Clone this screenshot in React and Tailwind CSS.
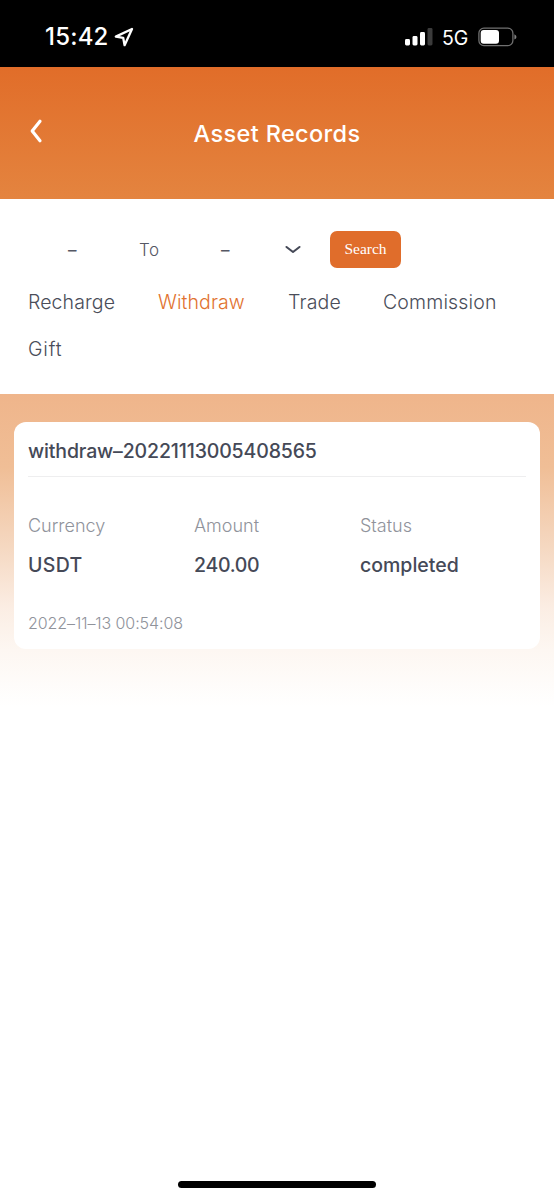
const tabs = [
  { name: "Recharge", style: "w-[88px] tracking-[0.1px] text-[#4a4d59]" },
  { name: "Withdraw", style: "w-[88px] tracking-[0.1px] text-[#e1722f]" },
  { name: "Trade", style: "w-[53px] tracking-[0.2px] text-[#4a4d59]" },
  { name: "Commission", style: "w-[114px] tracking-[0.15px] text-[#4a4d59]" },
  { name: "Gift", style: "w-[35px] tracking-[0.8px] text-[#4a4d59]" },
];

const fields = [
  { label: "Currency", value: "USDT", style: "tracking-[0.3px]" },
  { label: "Amount", value: "240.00", style: "tracking-[-0.3px]" },
  { label: "Status", value: "completed", style: "tracking-[0px]" },
];

function StatusBar() {
  return (
    <div className="flex h-[67px] items-start justify-between bg-black pl-[45px] pr-[36px] pt-[22px] text-white">
      <div className="flex h-[30px] items-center">
        <span className="w-[69px] whitespace-nowrap text-[24px] font-medium leading-[30px] tracking-[0.2px]">15:42</span>
        <svg width="20" height="20" viewBox="0 0 20 20" fill="none" stroke="white" strokeWidth="2.3" strokeLinejoin="round">
          <path d="M18 2 1.8 9.6 9.2 10.8 10.6 18.2Z" />
        </svg>
      </div>
      <div className="flex h-[30px] items-center">
        <svg width="28" height="18" viewBox="0 0 28 18" fill="white">
          <rect x="0" y="11" width="5" height="6.5" rx="1.4" />
          <rect x="7.5" y="8" width="5" height="9.5" rx="1.4" />
          <rect x="15" y="4" width="5" height="13.5" rx="1.4" />
          <rect x="22.5" y="0" width="5" height="17.5" rx="1.4" fill="#3b3b3b" />
        </svg>
        <span className="ml-[9px] w-[36px] whitespace-nowrap pt-[2px] text-[19.5px] leading-[30px]">5G</span>
        <svg width="40" height="20" viewBox="0 0 40 20" fill="none">
          <rect x="0.9" y="1.2" width="34" height="17.4" rx="5" stroke="#707070" strokeWidth="1.3" />
          <rect x="2.7" y="3" width="18.3" height="13.8" rx="3" fill="white" />
          <path d="M36.4 7.2Q38.5 8.2 38.5 9.9T36.4 12.6Z" fill="#808080" />
        </svg>
      </div>
    </div>
  );
}

function Header() {
  return (
    <header className="grid h-[132px] grid-cols-[1fr_auto_1fr] items-center pb-[2px] text-white">
      <svg className="mb-[2px] ml-[29px]" width="14" height="26" viewBox="0 0 14 26" fill="none" stroke="white" strokeWidth="3.2" strokeLinecap="round" strokeLinejoin="round">
        <path d="M11 3.2 3.2 13 11 22.8" />
      </svg>
      <h1 className="pt-[4px] text-[23.5px] font-medium leading-[32px] tracking-[0.35px]">Asset Records</h1>
      <span />
    </header>
  );
}

function Filters() {
  return (
    <section className="h-[195px] bg-white pt-[32px]">
      <div className="flex h-[37px] items-center text-[17px] text-[#555864]">
        <span className="ml-[68px] w-[71px] pt-[2px]">–</span>
        <span className="w-[82px] pt-[2px] font-light tracking-[0.5px]">To</span>
        <span className="w-[64px] pt-[2px]">–</span>
        <svg width="16" height="10" viewBox="0 0 16 10" fill="none" stroke="#454957" strokeWidth="2.1" strokeLinecap="round" strokeLinejoin="round">
          <path d="M1.5 2 8 7 14.5 2" />
        </svg>
        <button className="ml-[29px] h-[37px] w-[71px] rounded-[7px] bg-[#e06d2b] pb-px font-['Liberation_Serif',serif] text-[15.5px] text-white">
          Search
        </button>
      </div>
      <nav className="flex flex-wrap gap-x-[42px] pl-[28px] pr-[40px] pt-[11px]">
        {tabs.map((tab) => (
          <a key={tab.name} className={`h-[47px] whitespace-nowrap text-[19.5px] font-light leading-[47px] ${tab.style}`}>
            {tab.name}
          </a>
        ))}
      </nav>
    </section>
  );
}

function RecordCard() {
  return (
    <article className="mx-[14px] mt-[28px] flex h-[227px] flex-col rounded-[12px] bg-white px-[14px]">
      <h2 className="h-[55px] border-b border-[#eeeeef] pt-[14px] text-[19.5px] font-medium leading-[30px] tracking-[-0.14px] text-[#454957]">
        withdraw–20221113005408565
      </h2>
      <dl className="grid grid-cols-3 pt-[34px]">
        {fields.map((field) => (
          <div key={field.label}>
            <dt className="text-[18px] font-light leading-[30px] text-[#90939b]">{field.label}</dt>
            <dd className={`mt-[9px] text-[19.5px] font-medium leading-[30px] text-[#454957] ${field.style}`}>{field.value}</dd>
          </div>
        ))}
      </dl>
      <time className="mt-[28px] text-[16px] font-light leading-[30px] tracking-[-0.08px] text-[#90939b]">2022–11–13 00:54:08</time>
    </article>
  );
}

export default function App() {
  return (
    <div className="flex h-[1200px] w-[554px] flex-col overflow-hidden bg-white font-['Inter','Liberation_Sans',sans-serif]">
      <StatusBar />
      <main className="flex flex-1 flex-col bg-[linear-gradient(to_bottom,#e16d29_0px,#e4843f_132px,#efb58b_327px,#f0be96_400px,#f5d8c1_480px,#fbede3_540px,#fdf7f2_583px,#ffffff_640px)]">
        <Header />
        <Filters />
        <RecordCard />
        <div className="mx-auto mb-[12px] mt-auto h-[7px] w-[198px] rounded-full bg-black" />
      </main>
    </div>
  );
}
